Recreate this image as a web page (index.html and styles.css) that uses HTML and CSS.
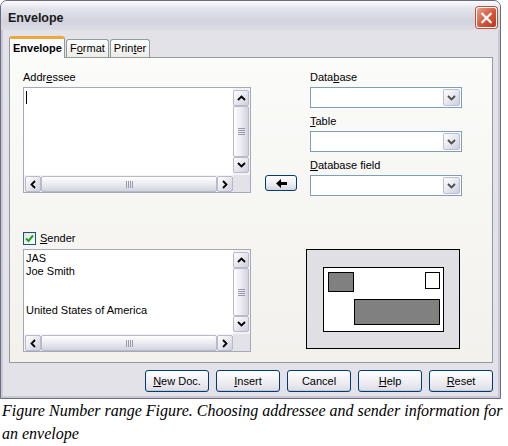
FILE: index.html
```html
<!DOCTYPE html>
<html>
  <head>
    <meta charset="UTF-8" />
    <title>Envelope</title>
    <link rel="stylesheet" href="styles.css">
  </head>
  <body>
    <div class="window">
      <div class="titlebar">
        <span class="title">Envelope</span>
        <span class="close">
          <svg width="20" height="20" viewBox="0 0 20 20">
            <path d="M5.5 5.5 L14.5 14.5 M14.5 5.5 L5.5 14.5" stroke="#fff" stroke-width="2.4" stroke-linecap="round" fill="none" />
          </svg>
        </span>
      </div>

      <div class="client">
        <div class="tabs">
          <div class="tab active">Envelope</div>
          <div class="tab">F<u>o</u>rmat</div>
          <div class="tab">Prin<u>t</u>er</div>
        </div>

        <div class="tabpage">
          <div class="col-left">
            <div class="label">Addr<u>e</u>ssee</div>
            <div class="textbox addressee">
              <div class="text"><span class="caret"></span></div>
              <div class="vscroll">
                <div class="sbtn">
                  <svg width="9" height="6" viewBox="0 0 9 6"><path d="M1 5 L4.5 1.5 L8 5" stroke="#000" stroke-width="1.8" fill="none" /></svg>
                </div>
                <div class="vthumb">
                  <svg width="7" height="7" viewBox="0 0 7 7"><path d="M0 0.5 H7 M0 2.5 H7 M0 4.5 H7 M0 6.5 H7" stroke="#9a9aac" stroke-width="1" /></svg>
                </div>
                <div class="sbtn">
                  <svg width="9" height="6" viewBox="0 0 9 6"><path d="M1 1 L4.5 4.5 L8 1" stroke="#000" stroke-width="1.8" fill="none" /></svg>
                </div>
              </div>
              <div class="hscroll">
                <div class="sbtn">
                  <svg width="6" height="9" viewBox="0 0 6 9"><path d="M5 1 L1.5 4.5 L5 8" stroke="#000" stroke-width="1.8" fill="none" /></svg>
                </div>
                <div class="hthumb">
                  <svg width="7" height="7" viewBox="0 0 7 7"><path d="M0.5 0 V7 M2.5 0 V7 M4.5 0 V7 M6.5 0 V7" stroke="#9a9aac" stroke-width="1" /></svg>
                </div>
                <div class="sbtn">
                  <svg width="6" height="9" viewBox="0 0 6 9"><path d="M1 1 L4.5 4.5 L1 8" stroke="#000" stroke-width="1.8" fill="none" /></svg>
                </div>
              </div>
              <div class="corner"></div>
            </div>

            <div class="check-row">
              <span class="checkbox">
                <svg width="9" height="9" viewBox="0 0 9 9"><path d="M1 4.5 L3.5 7 L8 1.5" stroke="#21a121" stroke-width="2" fill="none" /></svg>
              </span>
              <span class="label"><u>S</u>ender</span>
            </div>
            <div class="textbox sender">
              <div class="text">
                <div class="line">JAS</div>
                <div class="line">Joe Smith</div>
                <div class="line"></div>
                <div class="line"></div>
                <div class="line">United States of America</div>
              </div>
              <div class="vscroll">
                <div class="sbtn">
                  <svg width="9" height="6" viewBox="0 0 9 6"><path d="M1 5 L4.5 1.5 L8 5" stroke="#000" stroke-width="1.8" fill="none" /></svg>
                </div>
                <div class="vthumb">
                  <svg width="7" height="7" viewBox="0 0 7 7"><path d="M0 0.5 H7 M0 2.5 H7 M0 4.5 H7 M0 6.5 H7" stroke="#9a9aac" stroke-width="1" /></svg>
                </div>
                <div class="sbtn">
                  <svg width="9" height="6" viewBox="0 0 9 6"><path d="M1 1 L4.5 4.5 L8 1" stroke="#000" stroke-width="1.8" fill="none" /></svg>
                </div>
              </div>
              <div class="hscroll">
                <div class="sbtn">
                  <svg width="6" height="9" viewBox="0 0 6 9"><path d="M5 1 L1.5 4.5 L5 8" stroke="#000" stroke-width="1.8" fill="none" /></svg>
                </div>
                <div class="hthumb">
                  <svg width="7" height="7" viewBox="0 0 7 7"><path d="M0.5 0 V7 M2.5 0 V7 M4.5 0 V7 M6.5 0 V7" stroke="#9a9aac" stroke-width="1" /></svg>
                </div>
                <div class="sbtn">
                  <svg width="6" height="9" viewBox="0 0 6 9"><path d="M1 1 L4.5 4.5 L1 8" stroke="#000" stroke-width="1.8" fill="none" /></svg>
                </div>
              </div>
              <div class="corner"></div>
            </div>
          </div>

          <div class="col-mid">
            <div class="arrow-btn">
              <svg width="11" height="9" viewBox="0 0 11 9"><path d="M0 4.5 L5 0 V3 H11 V6 H5 V9 Z" fill="#000" /></svg>
            </div>
          </div>

          <div class="col-right">
            <div class="label">Data<u>b</u>ase</div>
            <div class="combo">
              <span class="combo-btn">
                <svg width="9" height="6" viewBox="0 0 9 6"><path d="M1 1 L4.5 4.5 L8 1" stroke="#4d4d4d" stroke-width="1.8" fill="none" /></svg>
              </span>
            </div>
            <div class="label"><u>T</u>able</div>
            <div class="combo">
              <span class="combo-btn">
                <svg width="9" height="6" viewBox="0 0 9 6"><path d="M1 1 L4.5 4.5 L8 1" stroke="#4d4d4d" stroke-width="1.8" fill="none" /></svg>
              </span>
            </div>
            <div class="label"><u>D</u>atabase field</div>
            <div class="combo">
              <span class="combo-btn">
                <svg width="9" height="6" viewBox="0 0 9 6"><path d="M1 1 L4.5 4.5 L8 1" stroke="#4d4d4d" stroke-width="1.8" fill="none" /></svg>
              </span>
            </div>

            <div class="preview">
              <div class="env">
                <div class="env-top">
                  <div class="env-sender"></div>
                  <div class="env-stamp"></div>
                </div>
                <div class="env-address"></div>
              </div>
            </div>
          </div>
        </div>

        <div class="buttons">
          <div class="btn"><u>N</u>ew Doc.</div>
          <div class="btn"><u>I</u>nsert</div>
          <div class="btn">Cancel</div>
          <div class="btn"><u>H</u>elp</div>
          <div class="btn"><u>R</u>eset</div>
        </div>
      </div>
    </div>

    <p class="caption">Figure Number range Figure. Choosing addressee and sender information for an envelope</p>
  </body>
</html>
```

FILE: styles.css
```css
* {
  margin: 0;
  padding: 0;
  box-sizing: border-box;
}

body {
  width: 508px;
  background-color: #fff;
  font-family: "Liberation Sans", Arial, sans-serif;
  font-size: 11px;
  color: #000;
}

u {
  text-decoration: underline;
  text-underline-offset: 1px;
}

.window {
  width: 501px;
  height: 399px;
  border: 1px solid #6b6b80;
  border-radius: 7px 7px 0 0;
  background-color: #e3e2e9;
  box-shadow: inset 2px 0 0 #c9c9d6, inset -2px 0 0 #c9c9d6, inset 0 -2px 0 #c9c9d6;
  display: flex;
  flex-direction: column;
}

.titlebar {
  height: 29px;
  border-radius: 6px 6px 0 0;
  background: linear-gradient(#fdfdfe, #e4e4ec 25%, #d3d3de 70%, #dcdce6);
  display: flex;
  align-items: center;
  justify-content: space-between;
  padding: 0 3px 0 7px;
}

.title {
  font-size: 12.5px;
  font-weight: bold;
  color: #1a1a1a;
  margin-top: 4px;
}

.close {
  width: 21px;
  height: 21px;
  margin-top: 4px;
  border: 1px solid #fff;
  border-radius: 3px;
  background: linear-gradient(135deg, #e9a18a, #d4563a 55%, #b8381f);
  box-shadow: 0 0 0 1px #b4553e;
  display: flex;
  align-items: center;
  justify-content: center;
}

.client {
  flex: 1;
  padding: 6px 7px 0 8px;
  display: flex;
  flex-direction: column;
}

.tabs {
  display: flex;
  align-items: flex-end;
  height: 21px;
}

.tab {
  height: 18px;
  padding: 0 3px;
  line-height: 16px;
  border: 1px solid #919b9c;
  border-bottom: none;
  border-radius: 3px 3px 0 0;
  background: linear-gradient(#ffffff, #ecebe6);
  margin-left: 1px;
  white-space: nowrap;
}

.tab.active {
  height: 22px;
  width: 56px;
  margin-left: 0;
  margin-bottom: -1px;
  padding: 0 3px;
  font-weight: bold;
  line-height: 18px;
  border-top: 3px solid #f0a83a;
  background: #fcfcfe;
  position: relative;
  z-index: 1;
}

.tabpage {
  height: 306px;
  width: 484px;
  border: 1px solid #919b9c;
  background: linear-gradient(#fbfbf9, #f2f1ec);
  display: flex;
  padding: 13px 0 0 13px;
}

.label {
  line-height: 13px;
  height: 13px;
  margin-bottom: 3px;
  white-space: nowrap;
}

.col-left {
  width: 228px;
  display: flex;
  flex-direction: column;
}

.textbox {
  width: 228px;
  border: 1px solid #a4abb6;
  background: #fff;
  display: grid;
  grid-template-columns: 1fr 17px;
  grid-template-rows: 1fr 17px;
}

.textbox.addressee {
  height: 106px;
}

.textbox.sender {
  height: 103px;
}

.text {
  padding: 2px 2px 0 2px;
  overflow: hidden;
}

.caret {
  display: block;
  width: 1px;
  height: 13px;
  margin-top: 1px;
  background: #000;
}

.line {
  height: 13px;
  line-height: 13px;
}

.vscroll {
  display: flex;
  flex-direction: column;
  padding: 2px 1px 2px 0;
  background: #f3f3f6;
}

.hscroll {
  display: flex;
  padding: 1px 0 0 1px;
  background: #f3f3f6;
}

.corner {
  background: #e3e2e9;
}

.sbtn {
  width: 16px;
  height: 16px;
  flex: none;
  border: 1px solid #b9b9c9;
  border-radius: 2px;
  background: linear-gradient(135deg, #ffffff, #e7e7ef 50%, #cfcfdc);
  display: flex;
  align-items: center;
  justify-content: center;
}

.vthumb {
  flex: 1;
  border: 1px solid #b9b9c9;
  border-radius: 2px;
  background: linear-gradient(90deg, #ffffff, #ebebf1 50%, #d3d3df);
  display: flex;
  align-items: center;
  justify-content: center;
}

.hthumb {
  flex: 1;
  height: 16px;
  border: 1px solid #b9b9c9;
  border-radius: 2px;
  background: linear-gradient(#ffffff, #ebebf1 50%, #d3d3df);
  display: flex;
  align-items: center;
  justify-content: center;
}

.check-row {
  display: flex;
  align-items: center;
  gap: 4px;
  margin-top: 39px;
  height: 13px;
  margin-bottom: 4px;
}

.check-row .label {
  margin-bottom: 0;
}

.checkbox {
  width: 13px;
  height: 13px;
  border: 1px solid #1c5180;
  background: linear-gradient(135deg, #e3e3dc, #ffffff);
  display: flex;
  align-items: center;
  justify-content: center;
}

.col-mid {
  width: 32px;
  margin-left: 14px;
}

.arrow-btn {
  margin-top: 104px;
  width: 32px;
  height: 16px;
  border: 1px solid #003c74;
  border-radius: 3px;
  background: linear-gradient(#ffffff, #ecebf0 60%, #d6d5df);
  display: flex;
  align-items: center;
  justify-content: center;
}

.col-right {
  width: 152px;
  margin-left: 13px;
  display: flex;
  flex-direction: column;
}

.combo {
  height: 21px;
  border: 1px solid #7f9db9;
  background: #fff;
  margin-bottom: 7px;
  display: flex;
  justify-content: flex-end;
  padding: 1px;
}

.combo-btn {
  width: 17px;
  height: 17px;
  border: 1px solid #b8c0d6;
  border-radius: 2px;
  background: linear-gradient(135deg, #ffffff, #e2e2ea 60%, #cdcdda);
  display: flex;
  align-items: center;
  justify-content: center;
}

.preview {
  margin-top: 46px;
  margin-left: -4px;
  width: 154px;
  height: 100px;
  border: 1px solid #000;
  background: #e0dfe4;
  display: flex;
  align-items: center;
  justify-content: center;
}

.env {
  width: 121px;
  height: 65px;
  border: 1px solid #000;
  background: #fff;
  padding: 4px 3px 0 4px;
  display: flex;
  flex-direction: column;
}

.env-top {
  display: flex;
  justify-content: space-between;
}

.env-sender {
  width: 26px;
  height: 20px;
  border: 1px solid #000;
  background: #808080;
}

.env-stamp {
  width: 15px;
  height: 17px;
  border: 1px solid #000;
  background: #fff;
}

.env-address {
  align-self: flex-end;
  margin-top: 7px;
  width: 86px;
  height: 26px;
  border: 1px solid #000;
  background: #808080;
}

.buttons {
  display: flex;
  justify-content: flex-end;
  gap: 7px;
  margin-top: 7px;
}

.btn {
  width: 64px;
  height: 22px;
  border: 1px solid #003c74;
  border-radius: 3px;
  background: linear-gradient(#ffffff, #f0f0f4 50%, #dcdce4);
  box-shadow: inset 0 -1px 0 #c9c9d6;
  text-align: center;
  line-height: 20px;
}

.caption {
  font-family: "Liberation Serif", "Times New Roman", serif;
  font-style: italic;
  font-size: 16px;
  line-height: 23px;
  padding: 0 2px;
}
```
